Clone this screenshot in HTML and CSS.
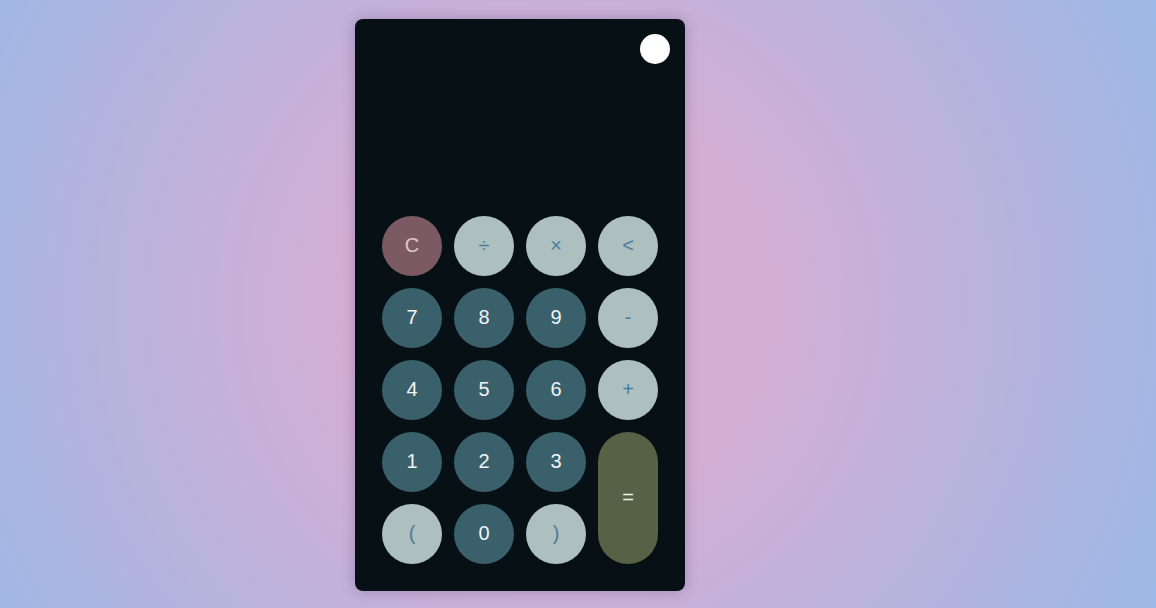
FILE: index.html
```html
<!DOCTYPE html>
<html lang="en">
<head>
<meta charset="utf-8">
<title>Calculator</title>
<link rel="stylesheet" href="styles.css">
</head>
<body>
<main class="calc">
  <div class="display">
    <button class="toggle" aria-label="Toggle theme"></button>
  </div>
  <div class="keypad">
    <button class="key clear">C</button>
    <button class="key op">÷</button>
    <button class="key op">×</button>
    <button class="key op">&lt;</button>
    <button class="key num">7</button>
    <button class="key num">8</button>
    <button class="key num">9</button>
    <button class="key op">-</button>
    <button class="key num">4</button>
    <button class="key num">5</button>
    <button class="key num">6</button>
    <button class="key op">+</button>
    <button class="key num">1</button>
    <button class="key num">2</button>
    <button class="key num">3</button>
    <button class="key equals">=</button>
    <button class="key op">(</button>
    <button class="key num">0</button>
    <button class="key op">)</button>
  </div>
</main>
</body>
</html>
```
FILE: styles.css
```css
* { box-sizing: border-box; }
html, body { margin: 0; height: 100%; }
body {
  display: flex;
  justify-content: center;
  align-items: center;
  padding: 2px 116px 0 0;
  background: radial-gradient(circle at 48% 50%, #d5aed4 30%, #9cb8e6 100%);
  font-family: "Liberation Sans", Arial, sans-serif;
}
.calc {
  width: 330px;
  height: 572px;
  background: #071015;
  border-radius: 8px;
  padding: 15px;
  display: flex;
  flex-direction: column;
  box-shadow: 0 0 14px rgba(40, 20, 60, 0.25);
}
.display {
  flex: 1;
  display: flex;
  justify-content: flex-end;
  align-items: flex-start;
}
.toggle {
  width: 30px;
  height: 30px;
  border: none;
  border-radius: 50%;
  background: #ffffff;
  padding: 0;
}
.keypad {
  display: grid;
  grid-template-columns: repeat(4, 60px);
  grid-auto-rows: 60px;
  gap: 12px;
  padding: 12px;
}
.key {
  border: none;
  border-radius: 30px;
  font-family: "Liberation Sans", Arial, sans-serif;
  font-size: 20px;
  padding: 0 0 2px 0;
  display: flex;
  align-items: center;
  justify-content: center;
}
.num { background: #3a606c; color: #f2f4f4; }
.op { background: #adbfbf; color: #4a7d9c; }
.clear { background: #7b5a63; color: #dccaca; }
.equals {
  grid-column: 4;
  grid-row: 4 / span 2;
  background: #566245;
  color: #ececec;
}
```
